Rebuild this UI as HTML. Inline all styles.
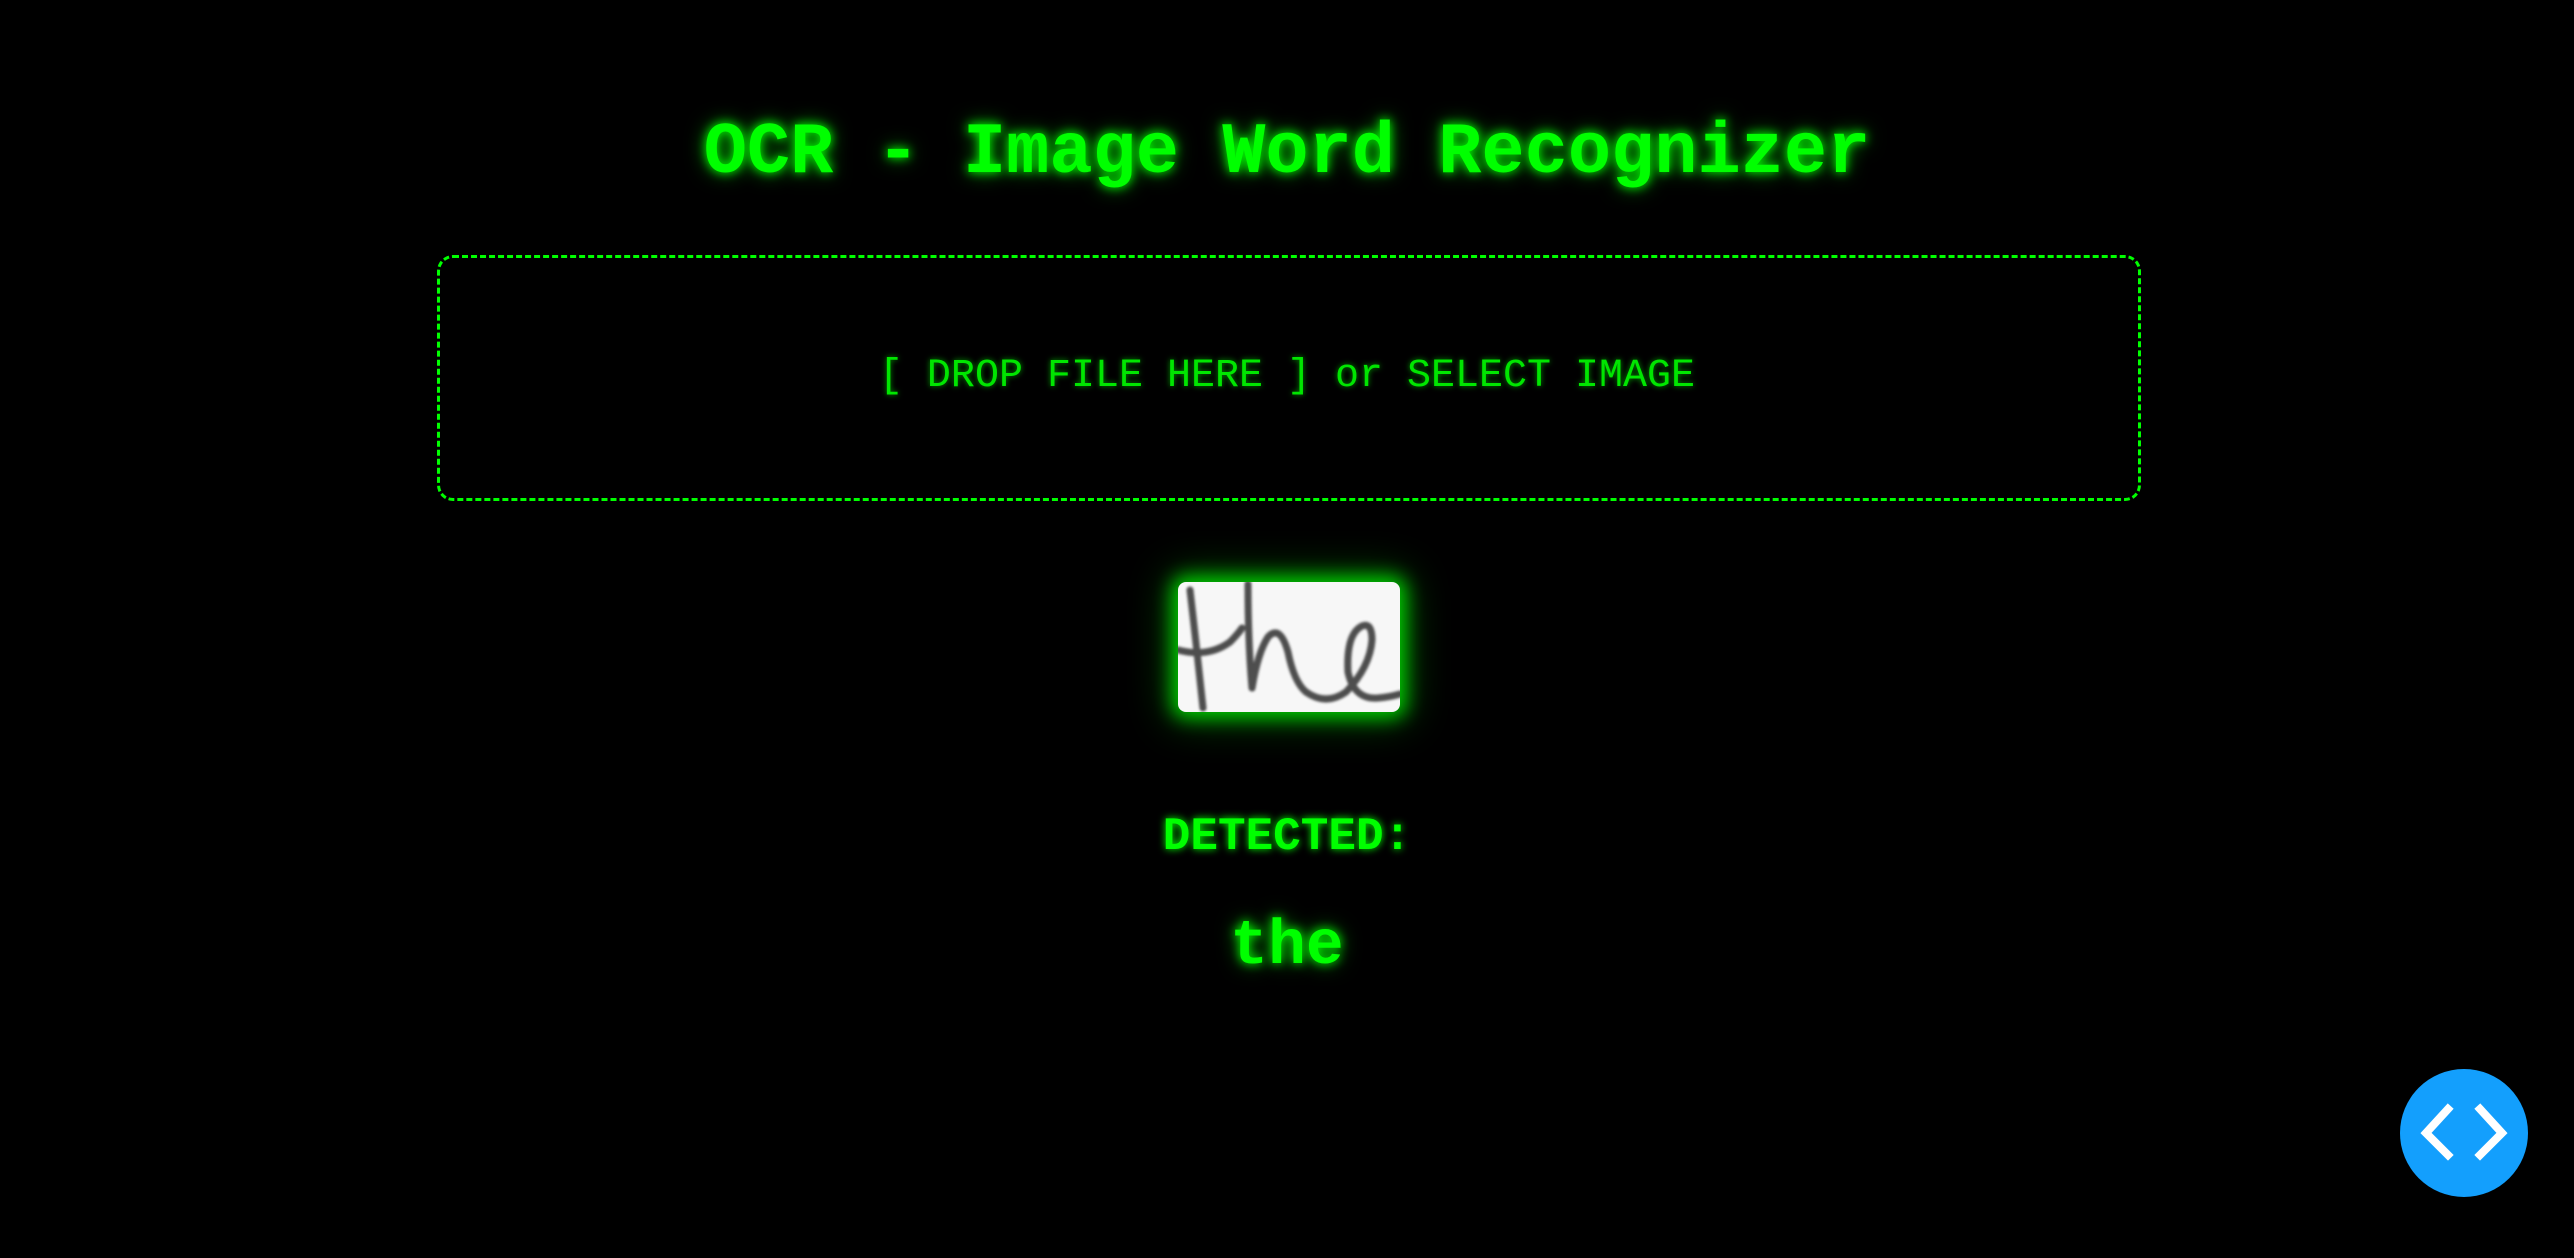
<!DOCTYPE html>
<html><head><meta charset="utf-8"><style>
html,body{margin:0;padding:0;background:#000;width:2574px;height:1258px;overflow:hidden}
body{position:relative;font-family:"Liberation Mono","Courier New",monospace;color:#00ff00}
.t{position:absolute;left:0;width:2574px;text-align:center;line-height:1;white-space:pre}
#title{top:117px;font-size:72px;font-weight:bold;text-shadow:0 0 10px #00ff00,0 0 20px rgba(0,255,0,.6)}
#drop{position:absolute;left:437px;top:255px;width:1698px;height:240px;border:3px dashed #00ff00;border-radius:16px}
#droptxt{top:357px;font-size:40px;color:#00e600;text-shadow:0 0 6px rgba(0,255,0,.6)}
#img{position:absolute;left:1178px;top:582px;width:222px;height:130px;background:#f7f7f7;border-radius:8px;box-shadow:0 0 18px 6px rgba(0,255,0,.75),0 0 40px 10px rgba(0,200,0,.35);overflow:hidden}
#det{top:814px;font-size:46px;font-weight:bold;text-shadow:0 0 8px #00ff00}
#res{top:915px;font-size:63px;font-weight:bold;text-shadow:0 0 10px #00ff00,0 0 20px rgba(0,255,0,.6)}
#btn{position:absolute;left:2400px;top:1069px;width:128px;height:128px;border-radius:50%;background:#139ffd}
</style></head><body>
<div class="t" id="title">OCR - Image Word Recognizer</div>
<div id="drop"></div>
<div class="t" id="droptxt">[ DROP FILE HERE ] or SELECT IMAGE</div>
<div id="img"><svg width="222" height="130" viewBox="0 0 222 130"><defs><filter id="b"><feGaussianBlur stdDeviation="1.2"/></filter></defs><g fill="none" stroke="#3a3a3a" stroke-width="7" stroke-linecap="round" stroke-linejoin="round" opacity=".9" filter="url(#b)">
<path d="M12 8 Q18 60 25 126"/>
<path d="M0 68 Q30 76 52 60 Q60 52 64 46"/>
<path d="M70 2 Q70 60 74 106 Q80 70 90 55 Q102 42 110 70 Q116 100 128 110 Q148 124 168 110 Q192 85 194 58 Q194 40 184 44 Q168 52 170 90 Q176 118 200 116 Q212 115 222 112"/>
</g></svg></div>
<div class="t" id="det">DETECTED:</div>
<div class="t" id="res">the</div>
<div id="btn"><svg width="128" height="128" viewBox="0 0 128 128"><g fill="none" stroke="#fff" stroke-width="8" stroke-linecap="square"><path d="M48 40 L26 64 L48 86"/><path d="M80 40 L102 64 L80 86"/></g></svg></div>
</body></html>
